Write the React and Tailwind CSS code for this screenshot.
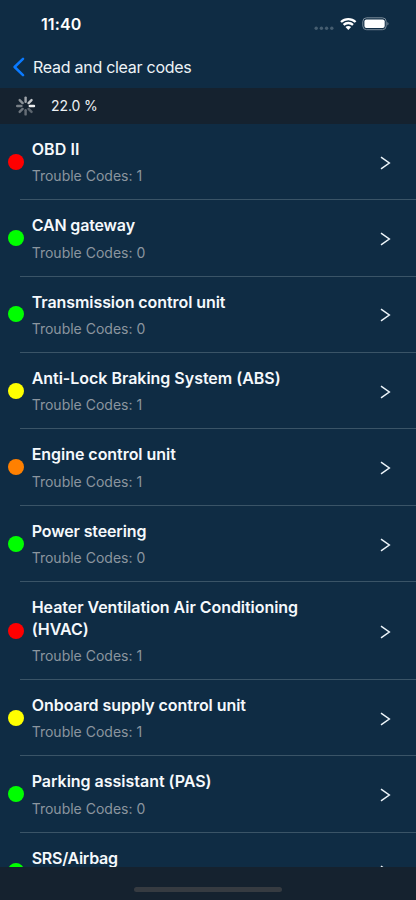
const modules = [
  { name: ["OBD II"], codes: 1, color: "bg-[#ff0000]", tracking: "tracking-[0.08px]" },
  { name: ["CAN gateway"], codes: 0, color: "bg-[#00ff00]", tracking: "tracking-[-0.15px]" },
  { name: ["Transmission control unit"], codes: 0, color: "bg-[#00ff00]", tracking: "tracking-[-0.07px]" },
  { name: ["Anti-Lock Braking System (ABS)"], codes: 1, color: "bg-[#ffff00]", tracking: "tracking-[-0.02px]" },
  { name: ["Engine control unit"], codes: 1, color: "bg-[#ff8000]", tracking: "tracking-[-0.04px]" },
  { name: ["Power steering"], codes: 0, color: "bg-[#00ff00]", tracking: "tracking-[-0.13px]" },
  { name: ["Heater Ventilation Air Conditioning", "(HVAC)"], codes: 1, color: "bg-[#ff0000]", tracking: "tracking-[-0.04px]" },
  { name: ["Onboard supply control unit"], codes: 1, color: "bg-[#ffff00]", tracking: "tracking-[-0.04px]" },
  { name: ["Parking assistant (PAS)"], codes: 0, color: "bg-[#00ff00]", tracking: "tracking-[-0.02px]" },
  { name: ["SRS/Airbag"], codes: 0, color: "bg-[#00ff00]", tracking: "tracking-[-0.27px]" },
];

// Opacity of each spinner spoke, clockwise from the top.
const spokes = [0.6, 0.75, 0.92, 0.3, 0.34, 0.38, 0.42, 0.5];

function StatusBar() {
  return (
    <div className="flex h-12 shrink-0 items-center justify-between pl-[41px] pr-[27px]">
      <span className="text-[16px] font-semibold leading-5 tracking-[0.1px] text-white">11:40</span>
      <div className="flex items-center">
        <svg width="20" height="16" viewBox="0 0 20 16" fill="#455d70">
          <circle cx="2.2" cy="12.2" r="1.7" />
          <circle cx="7.4" cy="12.2" r="1.7" />
          <circle cx="12.6" cy="12.2" r="1.7" />
          <circle cx="17.8" cy="12.2" r="1.7" />
        </svg>
        <svg className="ml-[6px]" width="17" height="16" viewBox="0 0 17 16" fill="none" stroke="#fff" strokeWidth="2.3">
          <path d="M1 6A10.7 10.7 0 0 1 15.6 6" />
          <path d="M3.6 8.9A6.8 6.8 0 0 1 13 8.9" />
          <path d="M8.3 13.9L5.5 11.1A3.9 3.9 0 0 1 11.1 11.1Z" fill="#fff" stroke="none" />
        </svg>
        <svg className="ml-[5px]" width="27" height="16" viewBox="0 0 27 16">
          <rect x="0.8" y="1.8" width="23.4" height="11.9" rx="3.8" fill="none" stroke="#7b8c9a" />
          <rect x="2.4" y="3.4" width="20.3" height="8.7" rx="2" fill="#fff" />
          <path d="M25.4 6.1Q26.5 6.7 26.5 7.8T25.4 9.6Z" fill="#7b8c9a" />
        </svg>
      </div>
    </div>
  );
}

function Spinner() {
  return (
    <svg width="20" height="20" viewBox="0 0 20 20" stroke="#fff" strokeWidth="2.4" strokeLinecap="round">
      {spokes.map((opacity, i) => (
        <line key={i} x1="9.6" y1="1.6" x2="9.6" y2="5.8" opacity={opacity} transform={`rotate(${i * 45} 9.6 10)`} />
      ))}
    </svg>
  );
}

function ModuleRow({ name, codes, color, tracking }) {
  return (
    <li className="shrink-0">
      <div className="flex items-center pl-[7.7px] pr-[25px]">
        <span className={`size-4 shrink-0 rounded-full ${color}`} />
        <div className="ml-2 flex-1 pb-[13.4px] pt-[15px]">
          {name.map((line) => (
            <div key={line} className={`whitespace-nowrap text-[16px] font-semibold leading-[21.4px] text-[#f5f9fc] ${tracking}`}>
              {line}
            </div>
          ))}
          <div className="mt-[6px] text-[14px] leading-[19.6px] text-[#8b959f]">Trouble Codes: {codes}</div>
        </div>
        <svg className="mt-[2px]" width="11" height="14" viewBox="0 0 11 14" fill="none" stroke="#edf5fa" strokeWidth="1.5">
          <path d="M1 1.2L9.3 7L1 12.8" />
        </svg>
      </div>
      <div className="ml-5 h-px bg-[#3a5467]" />
    </li>
  );
}

export default function App() {
  return (
    <div className="flex h-[900px] w-[416px] flex-col overflow-hidden bg-[#0f2c44] font-['Inter',sans-serif]">
      <StatusBar />
      <header className="flex h-10 shrink-0 items-center pl-[13px]">
        <svg className="-mt-[2px]" width="12" height="20" viewBox="0 0 12 20" fill="none" stroke="#0a7aff" strokeWidth="2.5" strokeLinecap="round" strokeLinejoin="round">
          <path d="M10 1.8L1.6 10L10 18.2" />
        </svg>
        <h1 className="-mt-[2px] ml-2 text-[16px] leading-5 tracking-[-0.27px] text-[#edf3f7]">Read and clear codes</h1>
      </header>
      <div className="flex h-[35.9px] shrink-0 items-center bg-[#15222f] pl-4">
        <Spinner />
        <span className="ml-[15px] text-[14px] leading-5 tracking-[-0.1px] text-[#edf1f4]">22.0 %</span>
      </div>
      <ul className="flex min-h-0 flex-1 flex-col overflow-hidden">
        {modules.map((module) => (
          <ModuleRow key={module.name[0]} {...module} />
        ))}
      </ul>
      <footer className="flex h-[33px] shrink-0 justify-center bg-[#15222f] pt-5">
        <div className="h-[5px] w-[148px] rounded-full bg-[#363b41]" />
      </footer>
    </div>
  );
}
